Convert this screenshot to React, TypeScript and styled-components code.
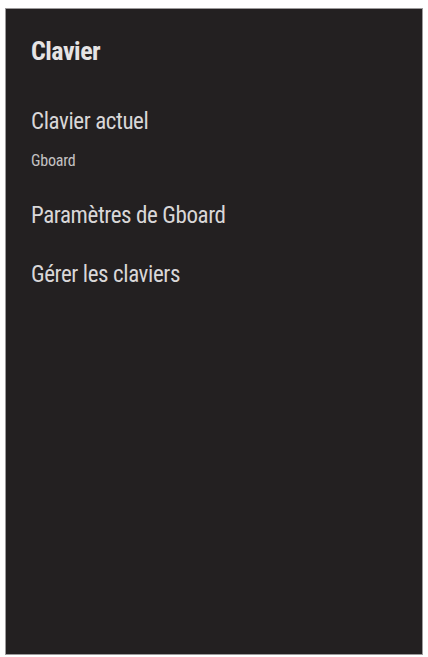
import styled, { createGlobalStyle } from "styled-components";

const GlobalStyle = createGlobalStyle`
    html, body{
        margin: 0;
        padding: 0;
        background: #ffffff;
    }

    body{
        font-family: "Roboto Condensed", "Liberation Sans Narrow", "DejaVu Sans Condensed", sans-serif;
    }
`

const StyledPanel = styled.section`

    box-sizing: border-box;
    width: 418px;
    height: 647px;
    margin: 8px 0px 0px 5px;
    padding: 27px 0px 0px 25px;

    background: #232021;
    border: 1px solid #9c9a9b;

    .titlePanel{

        margin: 0px 0px 27px 0px;

        font-size: 26px;
        font-weight: 700;
        line-height: 30px;
        letter-spacing: -0.5px;
        color: #e6e4e5;
    }
`

const StyledOption = styled.div`

    padding: 15px 0px 16px 0px;

    .optionTitle{

        font-size: 23px;
        line-height: 28px;
        letter-spacing: -0.4px;
        color: #d9d7d8;
    }

    .optionSummary{

        margin-top: 15px;

        font-size: 16px;
        line-height: 20px;
        letter-spacing: -0.2px;
        color: #c4c2c3;
    }
`

const ListOptions = [
    { nome: "Clavier actuel", resumo: "Gboard" },
    { nome: "Paramètres de Gboard" },
    { nome: "Gérer les claviers" },
]

function App(){

    return(
        <>
            <GlobalStyle/>
            <StyledPanel>
                <div className="titlePanel">Clavier</div>

                {
                    ListOptions.map((option) => (

                        <StyledOption key={option.nome}>
                            <div className="optionTitle">{option.nome}</div>
                            {option.resumo && <div className="optionSummary">{option.resumo}</div>}
                        </StyledOption>
                    ))
                }
            </StyledPanel>
        </>
    )
}

export default App
